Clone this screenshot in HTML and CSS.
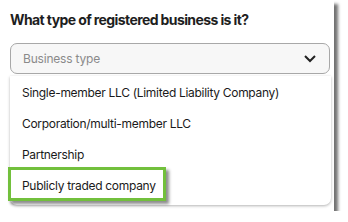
FILE: index.html
```html
<!DOCTYPE html>
<html>
	<head>
		<title>Business type</title>
		<meta charset="utf-8">
		<link rel="stylesheet" href="styles.css">
	</head>
	<body>
		<div class="shot">
			<div class="frage">What type of registered business is it?</div>
			<div class="auswahl">
				<span class="platzhalter">Business type</span>
				<svg class="pfeil" width="14" height="9" viewBox="0 0 14 9"><path d="M2 2l5 5 5-5" fill="none" stroke="#222" stroke-width="2"/></svg>
			</div>
			<div class="liste">
				<div class="eintrag">Single-member LLC (Limited Liability Company)</div>
				<div class="eintrag">Corporation/multi-member LLC</div>
				<div class="eintrag">Partnership</div>
				<div class="eintrag markiert">Publicly traded company</div>
			</div>
		</div>
	</body>
</html>
```
FILE: styles.css
```css
body,html{margin:0;padding:0;background:#fff;}
body{font-family:"Inter","Noto Sans",sans-serif;color:#222;}
.shot{width:334px;height:211px;background:#fff;box-shadow:4px 4px 3px rgba(0,0,0,0.55);box-sizing:border-box;position:relative;}
.frage{font-size:14px;font-weight:700;padding:11px 0 0 10px;height:43px;box-sizing:border-box;letter-spacing:-0.6px;color:#1e1e1e;}
.auswahl{margin:0 4px 0 10px;height:31px;border:1px solid #a8a8a8;border-radius:7px;background:#f7f7f7;display:flex;align-items:center;justify-content:space-between;padding:0 12px 0 12px;box-sizing:border-box;}
.platzhalter{font-size:12px;color:#8a8a8a;letter-spacing:-0.2px;}
.pfeil{display:block;}
.liste{margin:2px 3px 0 10px;background:#fff;border-radius:0 0 7px 7px;box-shadow:0 1px 3px rgba(0,0,0,0.3);padding:1px 0 4px 0;}
.eintrag{font-size:12px;height:31px;line-height:31px;padding-left:12px;color:#1a1a1a;letter-spacing:-0.3px;}
.markiert{position:relative;}
.markiert::after{content:"";position:absolute;left:-2px;top:-3px;width:152px;height:28px;border:3px solid #72c03c;box-shadow:3px 3px 3px rgba(0,0,0,0.45);}
```
